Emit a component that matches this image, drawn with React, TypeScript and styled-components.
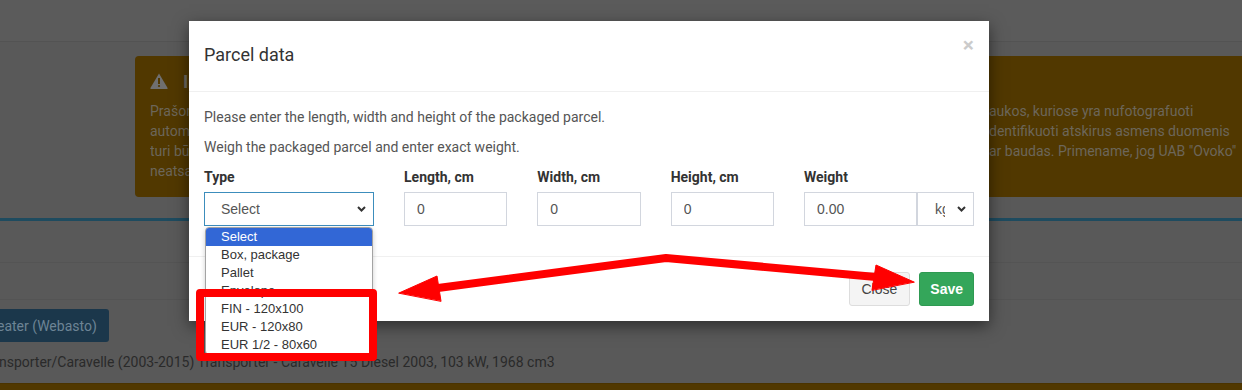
import React from 'react';
import styled, { createGlobalStyle } from 'styled-components';

const GlobalStyle = createGlobalStyle`
  html, body {
    margin: 0;
    padding: 0;
  }
  body {
    width: 1242px;
    height: 390px;
    overflow: hidden;
    background: #595959;
    font-family: Roboto, "Liberation Sans", Arial, sans-serif;
  }
  * {
    box-sizing: border-box;
  }
`;

const Page = styled.div`
  position: relative;
  width: 1242px;
  height: 390px;
  overflow: hidden;
  background: #595959;
  font-size: 14px;
`;

/* ---------- dimmed page behind the modal ---------- */

const TopBar = styled.div`
  height: 42px;
  background: #5b5b5b;
  border-bottom: 1px solid #535353;
`;

const Callout = styled.div`
  margin: 14px 0 0 135px;
  width: 1200px;
  height: 141px;
  padding: 15px;
  background: #513800;
  border-radius: 4px;
  color: #6c665a;
`;

const CalloutTitle = styled.div`
  display: flex;
  align-items: center;
  gap: 15px;
  height: 20px;
  font-size: 18px;
  font-weight: 700;
  color: #6f6a60;
`;

const CalloutText = styled.div`
  margin-top: 10px;
`;

const CalloutLine = styled.div`
  display: flex;
  height: 20px;
  line-height: 20px;
  white-space: nowrap;
`;

const LineHead = styled.span`
  flex: none;
  width: 839px;
  overflow: hidden;
`;

const Box = styled.div`
  margin-top: 21px;
  border-top: 3px solid #1e4b5f;
`;

const BoxRow = styled.div<{ $h: number }>`
  height: ${p => p.$h}px;
  border-bottom: 1px solid #545454;
`;

const ActionRow = styled.div`
  display: flex;
  margin: 9px 0 0 -25px;
`;

const HeaterButton = styled.button`
  height: 33px;
  padding: 0 12px;
  border: 0;
  border-radius: 3px;
  background: #1b374b;
  color: #6d8495;
  font: 14px Roboto, "Liberation Sans", sans-serif;
`;

const VehicleText = styled.div`
  margin: 10px 0 0 -21px;
  line-height: 20px;
  color: #2a2a2a;
  white-space: nowrap;
`;

const BottomStrip = styled.div`
  margin-top: 11px;
  height: 20px;
  background: #513800;
  border-top: 1px solid #4a3300;
`;

/* ---------- modal ---------- */

const ModalWindow = styled.div`
  position: absolute;
  top: 21px;
  left: 189px;
  width: 800px;
  background: #fff;
  box-shadow: 0 5px 15px rgba(0, 0, 0, 0.5);
  color: #333;
  z-index: 2;
`;

const ModalHeader = styled.div`
  display: flex;
  justify-content: space-between;
  align-items: flex-start;
  height: 71px;
  padding: 21px 15px 0;
  border-bottom: 1px solid #f0f0f0;
`;

const ModalTitle = styled.h4`
  margin: 0;
  font-size: 18px;
  font-weight: 400;
  line-height: 26px;
  color: #333;
`;

const CloseX = styled.button`
  margin-top: -7px;
  padding: 0;
  border: 0;
  background: none;
  font: 700 21px/1 Roboto, "Liberation Sans", sans-serif;
  color: #000;
  opacity: 0.2;
`;

const ModalBody = styled.div`
  padding: 15px;
`;

const Hint = styled.p`
  margin: 0 0 10px;
  line-height: 20px;
  color: #555;
`;

const FieldsRow = styled.div`
  display: grid;
  grid-template-columns: 200px repeat(3, 1fr) 200px;
  margin: 0 -15px;
`;

const Field = styled.div`
  padding: 0 15px;
  margin-bottom: 15px;
`;

const Label = styled.label`
  display: block;
  margin-bottom: 5px;
  line-height: 20px;
  font-weight: 700;
  color: #333;
`;

const TextInput = styled.input`
  display: block;
  width: 100%;
  min-width: 0;
  height: 34px;
  padding: 6px 12px;
  border: 1px solid #d2d6de;
  border-radius: 0;
  font: 14px "Liberation Sans", Arial, sans-serif;
  color: #555;
  outline: none;
`;

const SelectWrap = styled.div`
  position: relative;
`;

const SelectBox = styled.div<{ $focused?: boolean; $width?: number; $pad: number }>`
  position: relative;
  display: flex;
  align-items: center;
  flex: none;
  width: ${p => (p.$width ? `${p.$width}px` : '100%')};
  height: 34px;
  padding-left: ${p => p.$pad}px;
  border: 1px solid ${p => (p.$focused ? '#3c8dbc' : '#d2d6de')};
  font: 14px "Liberation Sans", Arial, sans-serif;
  color: #555;
  background: #fff;
`;

const SelectValue = styled.span<{ $clip?: number }>`
  overflow: hidden;
  white-space: nowrap;
  ${p => (p.$clip ? `width: ${p.$clip}px;` : '')}
`;

const Chevron = styled.svg`
  position: absolute;
  right: 7px;
  top: 50%;
  margin-top: -3px;
`;

const InputGroup = styled.div`
  display: flex;
`;

const OptionList = styled.ul`
  position: absolute;
  top: calc(100% + 1px);
  left: 1px;
  width: 168px;
  margin: 0;
  padding: 0;
  list-style: none;
  background: #fff;
  border: 1px solid #a3a3a3;
  border-radius: 4px;
  overflow: hidden;
  box-shadow: 0 2px 5px rgba(0, 0, 0, 0.2);
  font: 13px "Liberation Sans", Arial, sans-serif;
  z-index: 3;
`;

const OptionItem = styled.li<{ $active?: boolean }>`
  height: 18px;
  line-height: 18px;
  padding-left: 15px;
  background: ${p => (p.$active ? '#3267d6' : 'transparent')};
  color: ${p => (p.$active ? '#fff' : '#333')};
`;

const ModalFooter = styled.div`
  display: flex;
  justify-content: flex-end;
  gap: 9px;
  padding: 15px;
  border-top: 1px solid #f0f0f0;
`;

const Button = styled.button<{ $variant: 'default' | 'success' }>`
  height: 34px;
  padding: 0 ${p => (p.$variant === 'success' ? 10 : 12)}px;
  border-radius: 3px;
  font: ${p => (p.$variant === 'success' ? 700 : 400)} 14px "Liberation Sans", Arial, sans-serif;
  border: 1px solid ${p => (p.$variant === 'success' ? '#2e9a52' : '#ddd')};
  background: ${p => (p.$variant === 'success' ? '#34a65a' : '#f4f4f4')};
  color: ${p => (p.$variant === 'success' ? '#fff' : '#444')};
`;

/* ---------- annotations drawn over the screenshot ---------- */

const Highlight = styled.div`
  position: absolute;
  left: 196px;
  top: 289px;
  width: 181px;
  height: 72px;
  border: 8px solid #ff0000;
  border-radius: 4px;
  z-index: 5;
`;

const ArrowLayer = styled.svg`
  position: absolute;
  inset: 0;
  pointer-events: none;
  z-index: 6;
`;

const WarningIcon = () => (
  <svg width="18" height="16" viewBox="0 0 18 16">
    <path d="M9 0.6 L17.6 15 Q17.9 16 17 16 H1 Q0.1 16 0.4 15 Z" fill="#6f6f6f" />
    <rect x="8" y="5" width="2" height="6" fill="#513800" />
    <circle cx="9" cy="13" r="1.1" fill="#513800" />
  </svg>
);

const ChevronDown = () => (
  <Chevron width="9" height="6" viewBox="0 0 9 6">
    <path d="M1 1l3.5 3.5L8 1" fill="none" stroke="#333" strokeWidth="2" />
  </Chevron>
);

const options = ['Select', 'Box, package', 'Pallet', 'Envelope', 'FIN - 120x100', 'EUR - 120x80', 'EUR 1/2 - 80x60'];

const warningLines: [string, string][] = [
  ['Prašome įkelti tik tokias transporto priemonės nuotr', 'aukos, kuriose yra nufotografuoti'],
  ['automobilio numeriai būtų paslėpti, o asmenys negalėtų būti i', 'dentifikuoti atskirus asmens duomenis'],
  ['turi būti užtikrinta, kad už pažeidimus nebūtų skiriamos nuobaudos', ' ar baudas. Primename, jog UAB "Ovoko"'],
  ['neatsako už vartotojų įkeltą turinį.', ''],
];

const App = (): JSX.Element => {
  return (
    <Page>
      <GlobalStyle />
      <TopBar />
      <Callout>
        <CalloutTitle>
          <WarningIcon />
          <span>Informacija</span>
        </CalloutTitle>
        <CalloutText>
          {warningLines.map(([head, tail]) => (
            <CalloutLine key={head}>
              <LineHead>{head}</LineHead>
              <span>{tail}</span>
            </CalloutLine>
          ))}
        </CalloutText>
      </Callout>
      <Box>
        <BoxRow $h={42} />
        <BoxRow $h={37} />
        <ActionRow>
          <HeaterButton>Heater (Webasto)</HeaterButton>
        </ActionRow>
        <VehicleText>
          Transporter/Caravelle (2003-2015) Transporter - Caravelle T5 Diesel 2003, 103 kW, 1968 cm3
        </VehicleText>
      </Box>
      <BottomStrip />

      <ModalWindow>
        <ModalHeader>
          <ModalTitle>Parcel data</ModalTitle>
          <CloseX>×</CloseX>
        </ModalHeader>
        <ModalBody>
          <Hint>Please enter the length, width and height of the packaged parcel.</Hint>
          <Hint>Weigh the packaged parcel and enter exact weight.</Hint>
          <FieldsRow>
            <Field>
              <Label>Type</Label>
              <SelectWrap>
                <SelectBox $focused $pad={16}>
                  <SelectValue>Select</SelectValue>
                  <ChevronDown />
                </SelectBox>
                <OptionList>
                  {options.map((o, i) => (
                    <OptionItem key={o} $active={i === 0}>{o}</OptionItem>
                  ))}
                </OptionList>
              </SelectWrap>
            </Field>
            <Field>
              <Label>Length, cm</Label>
              <TextInput defaultValue="0" />
            </Field>
            <Field>
              <Label>Width, cm</Label>
              <TextInput defaultValue="0" />
            </Field>
            <Field>
              <Label>Height, cm</Label>
              <TextInput defaultValue="0" />
            </Field>
            <Field>
              <Label>Weight</Label>
              <InputGroup>
                <TextInput defaultValue="0.00" />
                <SelectBox $width={57} $pad={17}>
                  <SelectValue $clip={10}>kg</SelectValue>
                  <ChevronDown />
                </SelectBox>
              </InputGroup>
            </Field>
          </FieldsRow>
        </ModalBody>
        <ModalFooter>
          <Button $variant="default">Close</Button>
          <Button $variant="success">Save</Button>
        </ModalFooter>
      </ModalWindow>

      <Highlight />
      <ArrowLayer width="1242" height="390" viewBox="0 0 1242 390">
        <g fill="#ff0000" stroke="#ff0000" strokeLinecap="round" strokeLinejoin="round">
          <polyline points="438,288 666,258 876,277" fill="none" strokeWidth="8" />
          <polygon points="399,293 437,276 441,301" strokeWidth="1" />
          <polygon points="914,282 876,265 872,290" strokeWidth="1" />
        </g>
      </ArrowLayer>
    </Page>
  );
};

export default App;
